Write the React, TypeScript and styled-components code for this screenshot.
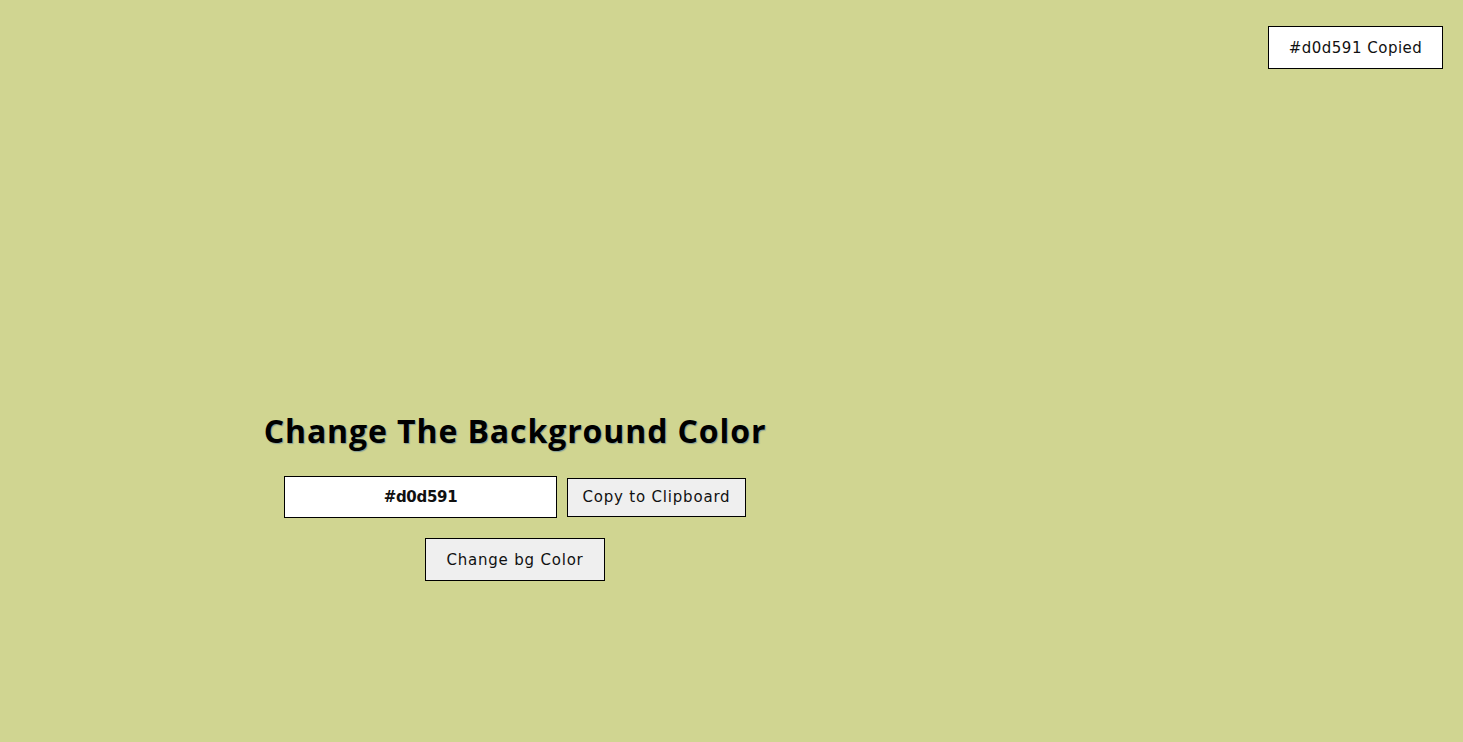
import React from "react";
import styled, { createGlobalStyle } from "styled-components";

const Global = createGlobalStyle`
  html, body { margin: 0; padding: 0; }
  body { background: #d0d591; font-family: "DejaVu Sans", "Open Sans", sans-serif; }
`;

const Page = styled.main`
  position: relative;
  min-height: 742px;
  background: #d0d591;
`;

const Toast = styled.div`
  position: absolute;
  top: 26px;
  right: 20px;
  width: 175px;
  height: 43px;
  box-sizing: border-box;
  background: #fff;
  border: 1px solid #000;
  display: flex;
  align-items: center;
  justify-content: center;
  font-size: 15px;
  letter-spacing: 0.5px;
  color: #111;
`;

const Panel = styled.section`
  width: 1030px;
  padding-top: 408px;
  display: flex;
  flex-direction: column;
  align-items: center;
`;

const Heading = styled.h1`
  margin: 0;
  font-family: "Open Sans", sans-serif;
  font-size: 32px;
  font-weight: 700;
  line-height: 46px;
  letter-spacing: 0.9px;
  color: #000;
  text-shadow: 1px 1px 1px rgba(40, 90, 160, 0.45);
`;

const Row = styled.div`
  margin-top: 22px;
  display: flex;
  align-items: center;
  gap: 10px;
`;

const HexInput = styled.input`
  width: 273px;
  height: 42px;
  box-sizing: border-box;
  border: 1px solid #000;
  background: #fff;
  text-align: center;
  font-family: inherit;
  font-weight: 700;
  font-size: 15px;
  letter-spacing: -0.3px;
  color: #111;
  outline: none;
`;

const Button = styled.button<{ $w: number; $h: number }>`
  width: ${(p) => p.$w}px;
  height: ${(p) => p.$h}px;
  box-sizing: border-box;
  border: 1px solid #000;
  background: #efefef;
  font-family: inherit;
  font-size: 15px;
  letter-spacing: 0.8px;
  color: #111;
  padding: 0;
  cursor: pointer;
`;

const Actions = styled.div`
  margin-top: 20px;
`;

export default function App() {
  return (
    <Page>
      <Global />
      <Toast>#d0d591 Copied</Toast>
      <Panel>
        <Heading>Change The Background Color</Heading>
        <Row>
          <HexInput readOnly value="#d0d591" />
          <Button $w={179} $h={39}>Copy to Clipboard</Button>
        </Row>
        <Actions>
          <Button $w={180} $h={43}>Change bg Color</Button>
        </Actions>
      </Panel>
    </Page>
  );
}
